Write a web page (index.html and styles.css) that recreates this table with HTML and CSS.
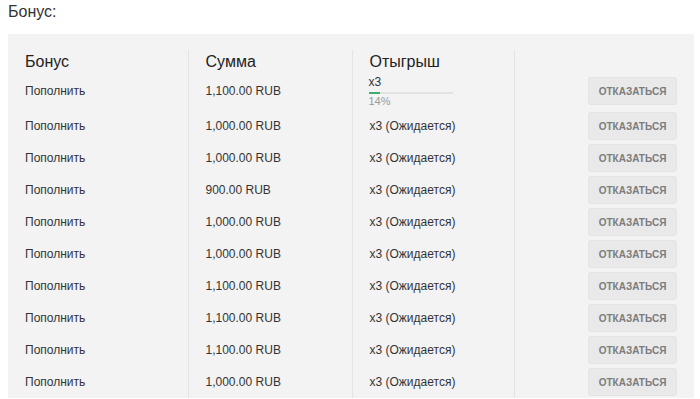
FILE: index.html
```html
<!DOCTYPE html>
<html lang="ru">

<head>
  <meta charset="UTF-8" />
  <meta name="viewport" content="width=device-width, initial-scale=1.0" />
  <title>Бонус</title>
  <link rel="stylesheet" href="styles.css">
</head>

<body>
  <h2 class="page-title">Бонус:</h2>

  <div class="bonus-panel">
    <table class="bonus-table">
      <colgroup>
        <col class="col-bonus">
        <col class="col-sum">
        <col class="col-wager">
        <col>
      </colgroup>
      <thead>
        <tr>
          <th>Бонус</th>
          <th>Сумма</th>
          <th>Отыгрыш</th>
          <th></th>
        </tr>
      </thead>
      <tbody>
        <tr class="row-active">
          <td>Пополнить</td>
          <td>1,100.00 RUB</td>
          <td class="wager-progress">
            <div>x3</div>
            <div class="bar"><div class="bar-fill" style="width: 14%"></div></div>
            <div class="percent">14%</div>
          </td>
          <td class="action"><button class="cancel-btn">Отказаться</button></td>
        </tr>
        <tr>
          <td>Пополнить</td>
          <td>1,000.00 RUB</td>
          <td>x3 (Ожидается)</td>
          <td class="action"><button class="cancel-btn">Отказаться</button></td>
        </tr>
        <tr>
          <td>Пополнить</td>
          <td>1,000.00 RUB</td>
          <td>x3 (Ожидается)</td>
          <td class="action"><button class="cancel-btn">Отказаться</button></td>
        </tr>
        <tr>
          <td>Пополнить</td>
          <td>900.00 RUB</td>
          <td>x3 (Ожидается)</td>
          <td class="action"><button class="cancel-btn">Отказаться</button></td>
        </tr>
        <tr>
          <td>Пополнить</td>
          <td>1,000.00 RUB</td>
          <td>x3 (Ожидается)</td>
          <td class="action"><button class="cancel-btn">Отказаться</button></td>
        </tr>
        <tr>
          <td>Пополнить</td>
          <td>1,000.00 RUB</td>
          <td>x3 (Ожидается)</td>
          <td class="action"><button class="cancel-btn">Отказаться</button></td>
        </tr>
        <tr>
          <td>Пополнить</td>
          <td>1,100.00 RUB</td>
          <td>x3 (Ожидается)</td>
          <td class="action"><button class="cancel-btn">Отказаться</button></td>
        </tr>
        <tr>
          <td>Пополнить</td>
          <td>1,100.00 RUB</td>
          <td>x3 (Ожидается)</td>
          <td class="action"><button class="cancel-btn">Отказаться</button></td>
        </tr>
        <tr>
          <td>Пополнить</td>
          <td>1,100.00 RUB</td>
          <td>x3 (Ожидается)</td>
          <td class="action"><button class="cancel-btn">Отказаться</button></td>
        </tr>
        <tr>
          <td>Пополнить</td>
          <td>1,000.00 RUB</td>
          <td>x3 (Ожидается)</td>
          <td class="action"><button class="cancel-btn">Отказаться</button></td>
        </tr>
      </tbody>
    </table>
  </div>
</body>

</html>
```

FILE: styles.css
```css
body {
  margin: 0;
  padding: 3px 8px 0;
  font-family: 'Liberation Sans', Arial, sans-serif;
  background-color: #fff;
  color: #333;
}

.page-title {
  margin: 0 0 13px;
  font-size: 16px;
  line-height: 18px;
  font-weight: normal;
  color: #333;
}

.bonus-panel {
  background-color: #f3f3f3;
  padding-top: 16px;
  width: 686px;
}

.bonus-table {
  width: 100%;
  table-layout: fixed;
  border-collapse: collapse;
}

.col-bonus {
  width: 180px;
}

.col-sum {
  width: 164px;
}

.col-wager {
  width: 162px;
}

.bonus-table th {
  text-align: left;
  font-weight: normal;
  font-size: 16px;
  line-height: 20px;
  padding: 2px 17px 0;
  color: #222;
  vertical-align: top;
}

.bonus-table td {
  font-size: 12px;
  line-height: 14px;
  padding: 2px 17px;
  height: 28px;
  vertical-align: middle;
}

.bonus-table th + th,
.bonus-table td + td {
  border-left: 1px solid #e4e4e4;
}

.bonus-table td.wager-progress {
  padding: 3px 17px 2px 16px;
  height: auto;
}

.bar {
  width: 84px;
  height: 2px;
  margin-top: 3px;
  background-color: #e2e2e2;
}

.bar-fill {
  height: 100%;
  background-color: #3dae6b;
}

.percent {
  margin-top: 1px;
  font-size: 11px;
  line-height: 13px;
  color: #9a9a9a;
}

.bonus-table td.action {
  text-align: right;
}

.cancel-btn {
  width: 89px;
  height: 28px;
  padding: 0;
  border: 1px solid #e4e4e4;
  border-radius: 3px;
  background-color: #e9e9e9;
  color: #7c7c7c;
  font-family: 'Liberation Sans', Arial, sans-serif;
  font-size: 10px;
  font-weight: bold;
  text-transform: uppercase;
  cursor: pointer;
}

.cancel-btn:hover {
  background-color: #dedede;
}
```
